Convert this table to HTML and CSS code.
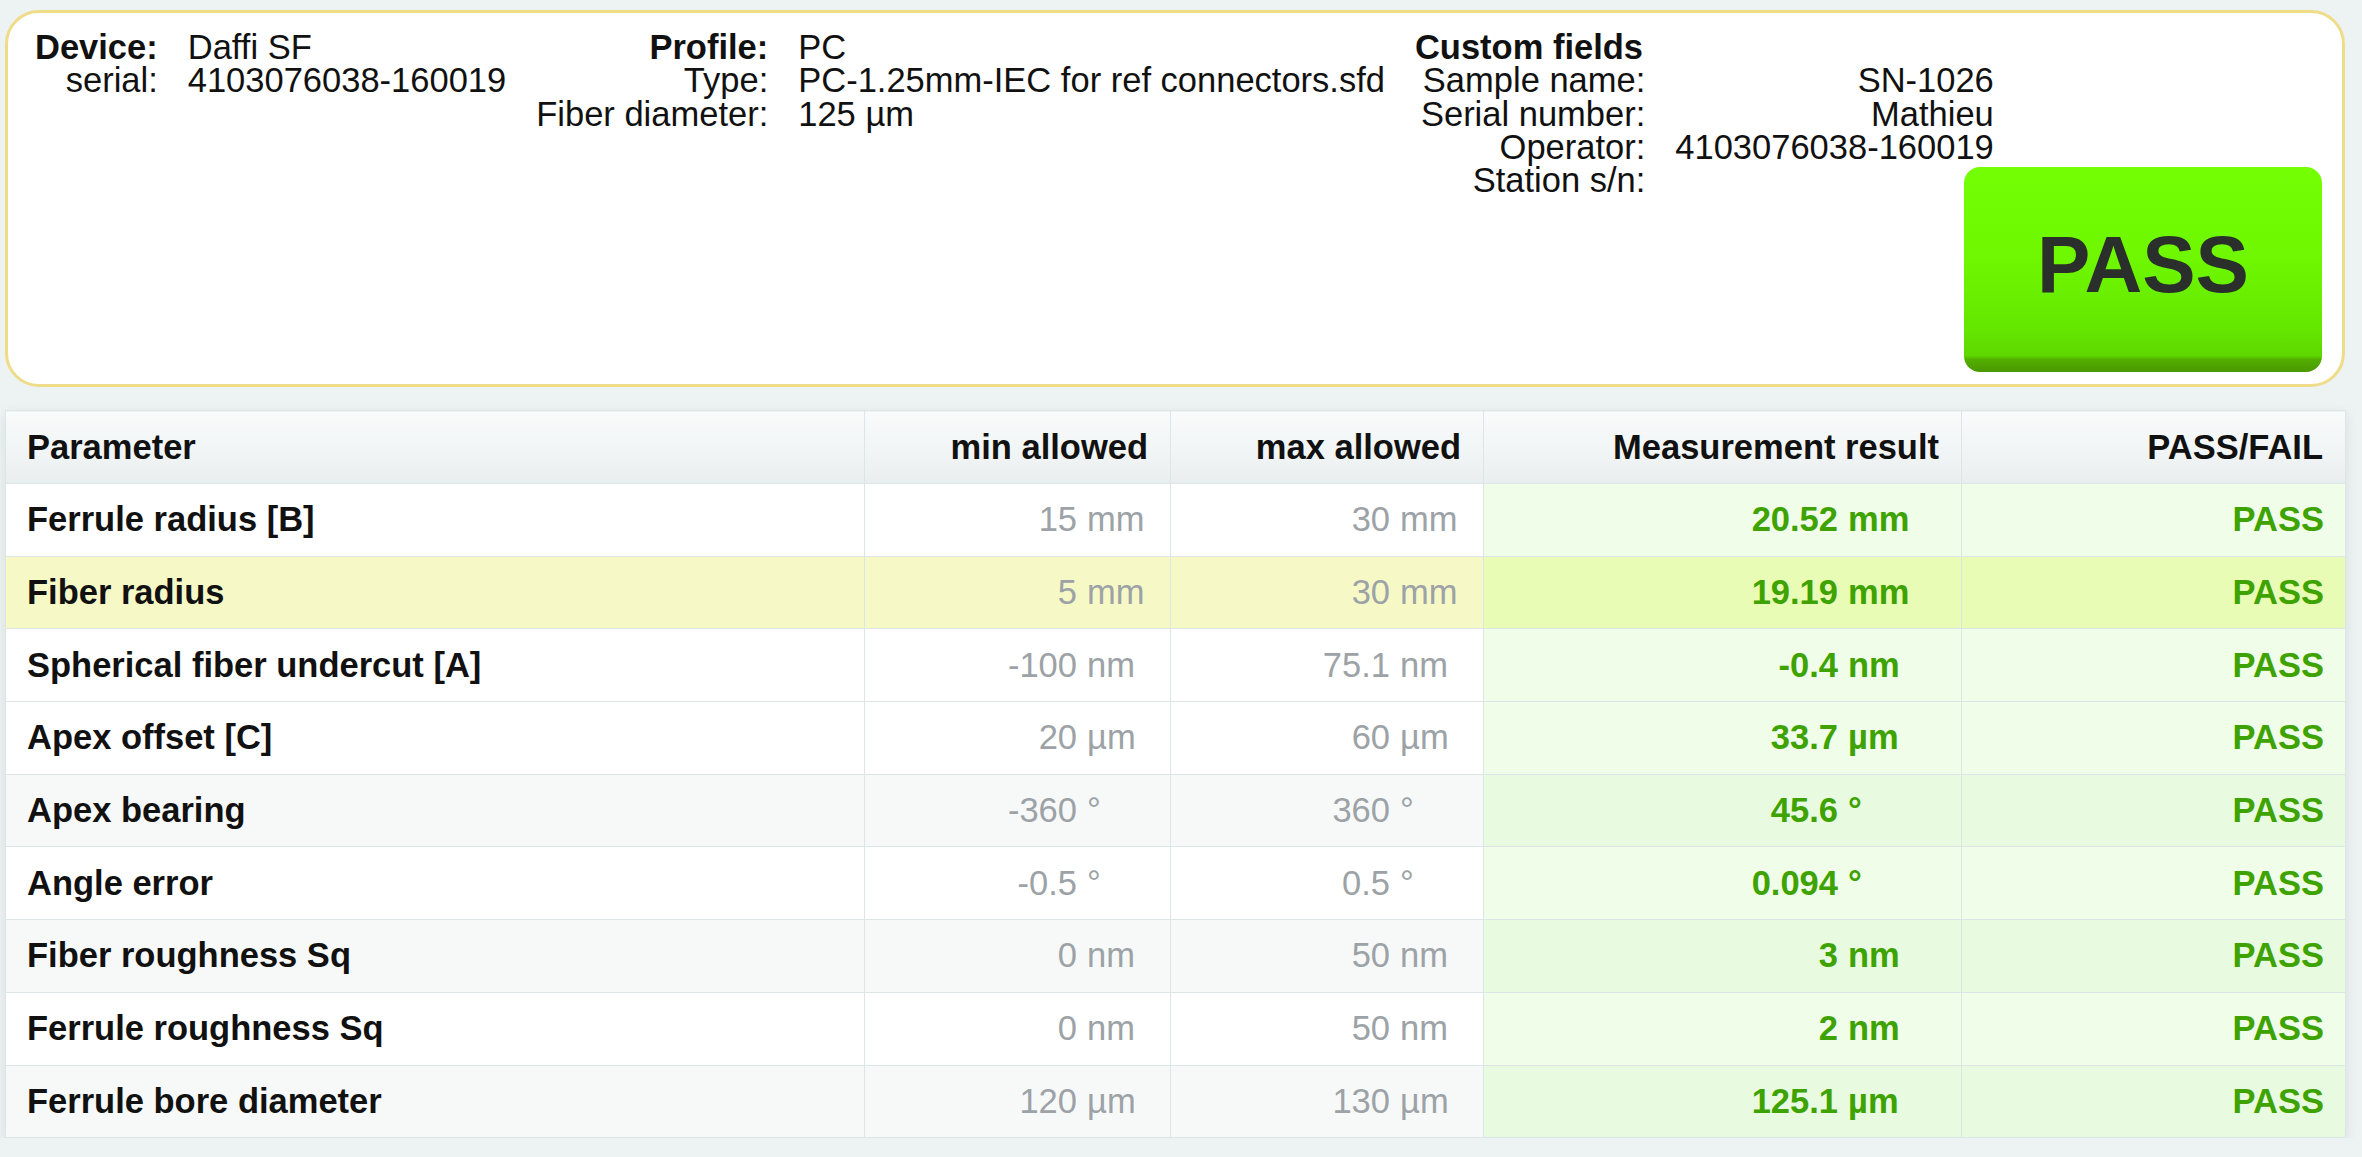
FILE: index.html
```
<!DOCTYPE html>
<html lang="en">
<head>
<meta charset="utf-8">
<title>Connector inspection report</title>
<link rel="stylesheet" href="styles.css">
</head>
<body>
<div class="page">
  <section class="summary">
    <div class="info">
      <div class="kv">
        <span class="k strong">Device:</span><span class="v">Daffi SF</span>
        <span class="k">serial:</span><span class="v">4103076038-160019</span>
      </div>
      <div class="kv">
        <span class="k strong">Profile:</span><span class="v">PC</span>
        <span class="k">Type:</span><span class="v">PC-1.25mm-IEC for ref connectors.sfd</span>
        <span class="k">Fiber diameter:</span><span class="v">125 µm</span>
      </div>
      <div class="custom">
        <div class="custom-title">Custom fields</div>
        <div class="kv kv-right">
          <span class="k">Sample name:</span><span class="v">SN-1026</span>
          <span class="k">Serial number:</span><span class="v">Mathieu</span>
          <span class="k">Operator:</span><span class="v">4103076038-160019</span>
          <span class="k">Station s/n:</span><span class="v"></span>
        </div>
      </div>
    </div>
    <div class="verdict">PASS</div>
  </section>

  <table class="results">
    <colgroup>
      <col class="c-param"><col class="c-min"><col class="c-max"><col class="c-meas"><col class="c-pf">
    </colgroup>
    <thead>
      <tr>
        <th class="left">Parameter</th>
        <th>min allowed</th>
        <th>max allowed</th>
        <th>Measurement result</th>
        <th>PASS/FAIL</th>
      </tr>
    </thead>
    <tbody>
      <tr>
        <td class="param">Ferrule radius [B]</td>
        <td class="lim"><span class="num">15</span><span class="unit">mm</span></td>
        <td class="lim"><span class="num">30</span><span class="unit">mm</span></td>
        <td class="meas"><span class="num">20.52</span><span class="unit">mm</span></td>
        <td class="pf">PASS</td>
      </tr>
      <tr class="hl">
        <td class="param">Fiber radius</td>
        <td class="lim"><span class="num">5</span><span class="unit">mm</span></td>
        <td class="lim"><span class="num">30</span><span class="unit">mm</span></td>
        <td class="meas"><span class="num">19.19</span><span class="unit">mm</span></td>
        <td class="pf">PASS</td>
      </tr>
      <tr>
        <td class="param">Spherical fiber undercut [A]</td>
        <td class="lim"><span class="num">-100</span><span class="unit">nm</span></td>
        <td class="lim"><span class="num">75.1</span><span class="unit">nm</span></td>
        <td class="meas"><span class="num">-0.4</span><span class="unit">nm</span></td>
        <td class="pf">PASS</td>
      </tr>
      <tr>
        <td class="param">Apex offset [C]</td>
        <td class="lim"><span class="num">20</span><span class="unit">µm</span></td>
        <td class="lim"><span class="num">60</span><span class="unit">µm</span></td>
        <td class="meas"><span class="num">33.7</span><span class="unit">µm</span></td>
        <td class="pf">PASS</td>
      </tr>
      <tr class="stripe">
        <td class="param">Apex bearing</td>
        <td class="lim"><span class="num">-360</span><span class="unit">°</span></td>
        <td class="lim"><span class="num">360</span><span class="unit">°</span></td>
        <td class="meas"><span class="num">45.6</span><span class="unit">°</span></td>
        <td class="pf">PASS</td>
      </tr>
      <tr>
        <td class="param">Angle error</td>
        <td class="lim"><span class="num">-0.5</span><span class="unit">°</span></td>
        <td class="lim"><span class="num">0.5</span><span class="unit">°</span></td>
        <td class="meas"><span class="num">0.094</span><span class="unit">°</span></td>
        <td class="pf">PASS</td>
      </tr>
      <tr class="stripe">
        <td class="param">Fiber roughness Sq</td>
        <td class="lim"><span class="num">0</span><span class="unit">nm</span></td>
        <td class="lim"><span class="num">50</span><span class="unit">nm</span></td>
        <td class="meas"><span class="num">3</span><span class="unit">nm</span></td>
        <td class="pf">PASS</td>
      </tr>
      <tr>
        <td class="param">Ferrule roughness Sq</td>
        <td class="lim"><span class="num">0</span><span class="unit">nm</span></td>
        <td class="lim"><span class="num">50</span><span class="unit">nm</span></td>
        <td class="meas"><span class="num">2</span><span class="unit">nm</span></td>
        <td class="pf">PASS</td>
      </tr>
      <tr class="stripe">
        <td class="param">Ferrule bore diameter</td>
        <td class="lim"><span class="num">120</span><span class="unit">µm</span></td>
        <td class="lim"><span class="num">130</span><span class="unit">µm</span></td>
        <td class="meas"><span class="num">125.1</span><span class="unit">µm</span></td>
        <td class="pf">PASS</td>
      </tr>
    </tbody>
  </table>
</div>
</body>
</html>
```

FILE: styles.css
```
html, body {
  margin: 0;
  padding: 0;
  background: #edf2f2;
}

body {
  font-family: "Liberation Sans", Arial, sans-serif;
  font-size: 34.5px;
  color: #111;
}

.page {
  width: 2340px;
  padding: 10px 0 0 5px;
}

/* ---------- summary panel ---------- */
.summary {
  position: relative;
  box-sizing: border-box;
  height: 377px;
  background: #fff;
  border: 3px solid #efdc88;
  border-radius: 34px;
  padding: 18px 0 0 27px;
}

.info {
  display: flex;
  gap: 30px;
  line-height: 33.3px;
}

.kv {
  display: grid;
  grid-template-columns: auto auto;
  column-gap: 30px;
  align-content: start;
}

.kv .k {
  text-align: right;
}

.kv .v {
  text-align: left;
  white-space: nowrap;
}

.kv-right {
  padding-left: 6px;
}

.kv-right .v {
  text-align: right;
}

.strong,
.custom-title {
  font-weight: bold;
}

.verdict {
  position: absolute;
  right: 20px;
  bottom: 12px;
  width: 358px;
  height: 205px;
  box-sizing: border-box;
  border-radius: 16px;
  background: linear-gradient(180deg, #74ff05 0%, #6ef700 45%, #64e600 80%, #5fd700 92%, #52ae00 94%, #4a9800 100%);
  color: #2b2f2b;
  font-weight: bold;
  font-size: 80px;
  display: flex;
  align-items: center;
  justify-content: center;
  padding-bottom: 10px;
}

/* ---------- results table ---------- */
.results {
  margin-top: 23px;
  width: 2340px;
  table-layout: fixed;
  border-collapse: collapse;
  background: #fff;
  box-shadow: 0 4px 12px rgba(0, 40, 40, 0.09);
}

.c-param { width: 859px; }
.c-min { width: 306px; }
.c-max { width: 313px; }
.c-meas { width: 478px; }
.c-pf { width: 384px; }

.results th,
.results td {
  border: 1px solid #dde6e6;
  white-space: nowrap;
  padding: 0;
}

.results th {
  height: 72px;
  font-weight: bold;
  text-align: right;
  padding-right: 22px;
  background: linear-gradient(180deg, #f9fbfb 0%, #f1f4f4 60%, #e8eded 100%);
}

.results th.left {
  text-align: left;
  padding-left: 21px;
}

.results td {
  height: 71.7px;
}

.results td.param {
  font-weight: bold;
  padding-left: 21px;
}

.results td.lim {
  text-align: right;
  color: #9ca2a6;
  padding-right: 23px;
}

.results td.meas {
  text-align: right;
  color: #3ea200;
  font-weight: bold;
  padding-right: 53px;
  background: #effde9;
}

.results td.pf {
  text-align: right;
  color: #3ea200;
  font-weight: bold;
  padding-right: 21px;
  background: #effde9;
}

.unit {
  display: inline-block;
  width: 60px;
  margin-left: 10px;
  text-align: left;
}

.results tr.stripe td {
  background: #f7f9f9;
}

.results tr.stripe td.meas,
.results tr.stripe td.pf {
  background: #e8fbe1;
}

.results tr.hl td {
  background: #f6f9c6;
}

.results tr.hl td.meas,
.results tr.hl td.pf {
  background: #e8fcb5;
}
```
